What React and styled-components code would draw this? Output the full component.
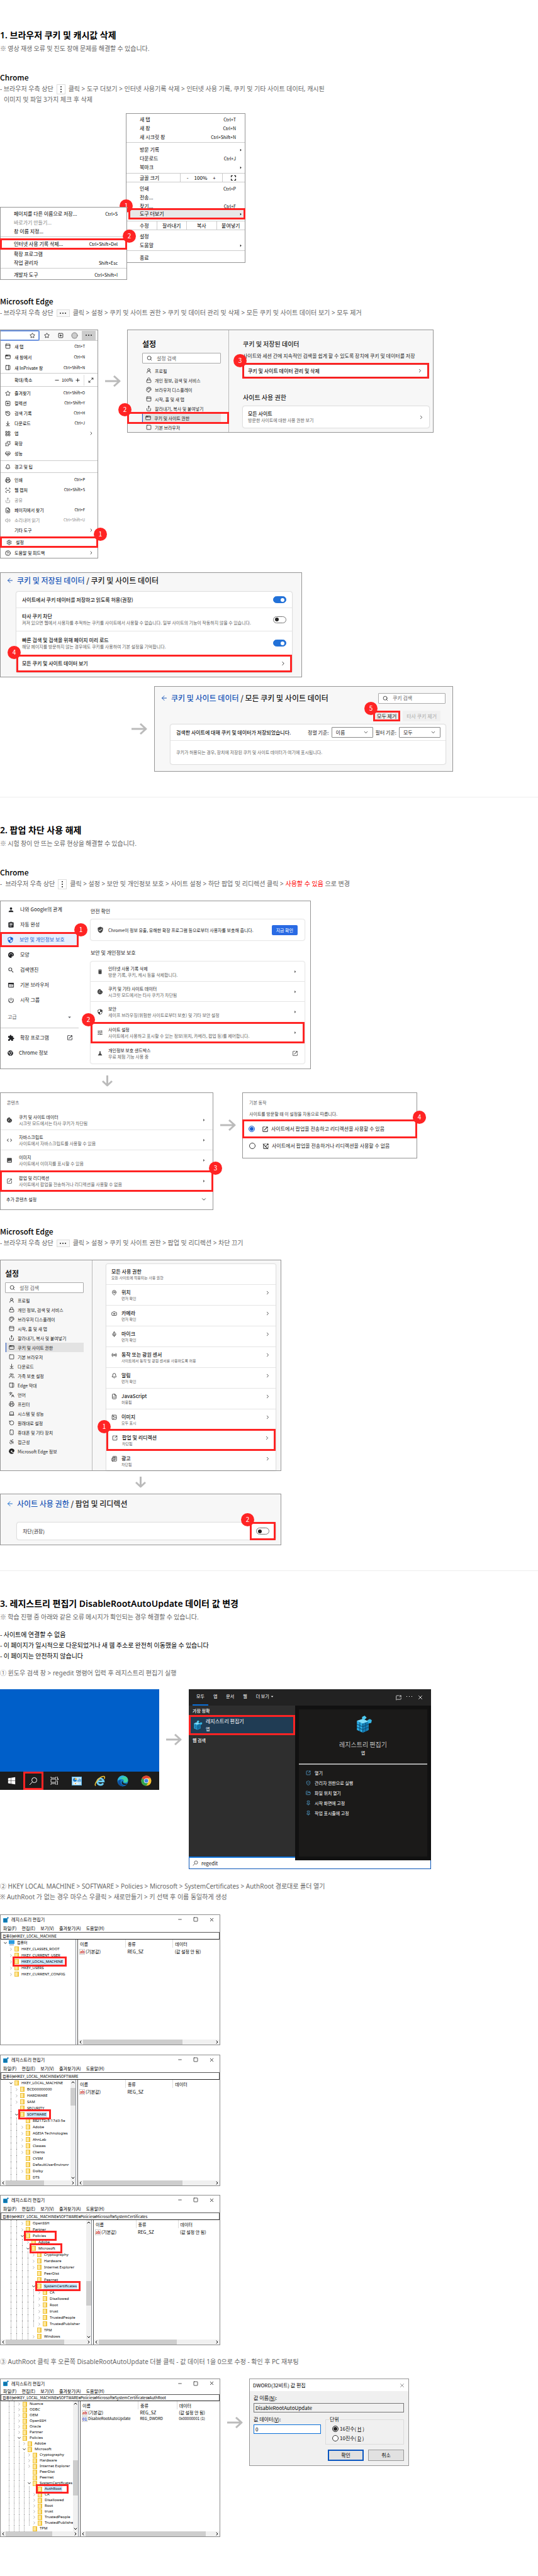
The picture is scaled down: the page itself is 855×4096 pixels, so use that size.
import { useState } from "react";
import styled, { createGlobalStyle, css } from "styled-components";
import {
  Accessibility, AppWindow, ArrowLeft, ArrowDownToLine, Bell, Camera, ChevronDown, ChevronLeft, ChevronRight,
  ChevronUp, CircleUserRound, FolderOpen, HeartPulse, History, Image, Languages, Laptop, LayoutGrid,
  Lock, MapPin, Maximize2, MessageSquareShare, Mic, Minus, PanelTop, Pin, Plus, Printer, Puzzle, Radio as RadioIcon,
  RotateCcw, ScanLine, Search, Settings, Share, ShieldCheck, Smartphone, SquareArrowOutUpRight, SquarePlus,
  Star, Square, UserRound, Users, Volume2, X, CircleHelp, FileSearch, Palette, PanelRight, FileCode, Newspaper,
} from "lucide-react";
import {
  MdArrowDropDown, MdArrowRight, MdAssignment, MdCode, MdCookie, MdDelete, MdExtension, MdFullscreen, MdImage,
  MdOpenInNew, MdOutlineOpenInNewOff, MdPalette, MdPerson, MdPowerSettingsNew, MdScience, MdSearch, MdSecurity,
  MdTune, MdVerifiedUser, MdWeb,
} from "react-icons/md";
import { FaChrome, FaEdge, FaWindows } from "react-icons/fa";

const RED = "#ff2424";
const TEXT_FONT = '"Noto Sans", "Noto Sans CJK KR", sans-serif';

const GlobalStyle = createGlobalStyle`
  * {
    box-sizing: border-box;
  }
  body {
    margin: 0;
    background: #fff;
    color: #222;
    font-family: "Noto Sans CJK KR", "Open Sans", sans-serif;
  }
  button, input, select {
    font: inherit;
    color: inherit;
    margin: 0;
    padding: 0;
    border: 0;
    background: none;
    text-align: left;
  }
  h2, h3, h4, p, ul, fieldset {
    margin: 0;
    padding: 0;
  }
  ul {
    list-style: none;
  }
  svg {
    display: block;
    flex: none;
  }
`;

/* ---------- page text ---------- */

const Page = styled.main`
  padding: 4px 0 20px;
`;

const Section = styled.section`
  padding: 42px 0 40px;

  & + & {
    border-top: 1px solid #eee;
  }
`;

const Title = styled.h2`
  font-family: ${TEXT_FONT};
  font-size: 14px;
  line-height: 20px;
  font-weight: 600;
  color: #000;
`;

const Note = styled.p`
  margin-top: 3px;
  font-size: 10px;
  line-height: 16px;
  color: #666;
`;

const Browser = styled.h3`
  margin-top: ${(p) => p.$top || 26}px;
  font-size: 12px;
  line-height: 16px;
  font-weight: 500;
  color: #000;
`;

const Step = styled.p`
  display: flex;
  align-items: center;
  margin-top: ${(p) => p.$top || 0}px;
  font-family: ${TEXT_FONT};
  font-size: 10px;
  line-height: 17px;
  color: #666;
  white-space: pre;
`;

const StepNext = styled(Step)`
  padding-left: 6px;
`;

const Bullets = styled.ul`
  margin-top: 11px;
  font-size: 10px;
  line-height: 17px;
  color: #000;
`;

const Warn = styled.span`
  color: #f00;
`;

const Key = styled.span`
  display: inline-flex;
  align-items: center;
  justify-content: center;
  width: ${(p) => (p.$wide ? 21 : 14)}px;
  height: ${(p) => (p.$wide ? 12 : 16)}px;
  margin: 0 5px;
  border: 1px solid #ddd;
  background: ${(p) => (p.$wide ? "#f7f7f7" : "#fff")};
  color: #222;
`;

/* ---------- figures ---------- */

const Figures = styled.div`
  display: grid;
  grid-template-columns: ${(p) => p.$cols.map((c) => `minmax(0, ${c}fr)`).join(" ")};
  align-items: ${(p) => p.$align || "start"};
  margin-top: ${(p) => p.$top || 18}px;
`;

const Panel = styled.div`
  position: relative;
  border: 1px solid #959595;
  background: ${(p) => (p.$gray ? "#f7f7f7" : "#fff")};
  color: #1b1b1b;
  font-size: 8px;
  line-height: 10px;
`;

const ArrowCell = styled.div`
  display: flex;
  justify-content: ${(p) => p.$justify || "center"};
  padding: ${(p) => p.$pad || "0"};
`;

const Mark = styled.div`
  position: relative;
  z-index: 1;
  border: 3px solid ${RED};
  margin: ${(p) => p.$margin || "0"};
`;

const Badge = styled.span`
  position: absolute;
  z-index: 2;
  top: -17px;
  ${(p) => (p.$right ? "right" : "left")}: -17px;
  width: 21px;
  height: 21px;
  border-radius: 50%;
  background: ${RED};
  color: #fff;
  font-size: 10px;
  line-height: 20px;
  font-weight: 400;
  text-align: center;
`;

function FlowRight() {
  return (
    <svg width="25" height="18" viewBox="0 0 25 18" fill="none" stroke="#bbb" strokeWidth="3">
      <path d="M0 9h23M14 1l9 8-9 8" strokeLinejoin="round" />
    </svg>
  );
}

function FlowDown() {
  return (
    <svg width="17" height="18" viewBox="0 0 17 18" fill="none" stroke="#bbb" strokeWidth="3">
      <path d="M8.500 0v16M1 9l7.500 7L16 9" strokeLinejoin="round" />
    </svg>
  );
}

function Dots({ vertical }) {
  const at = [2, 6, 10];
  return (
    <svg width="12" height="12" viewBox="0 0 12 12" fill="#222">
      {at.map((n) => (
        <circle key={n} cx={vertical ? 6 : n} cy={vertical ? n : 6} r="1" />
      ))}
    </svg>
  );
}

/* ---------- menus ---------- */

const Menu = styled(Panel)`
  padding: ${(p) => p.$pad};
  margin: ${(p) => p.$margin || "0"};
  z-index: ${(p) => p.$z || 0};
  color: #000;
`;

const MenuItem = styled.button`
  display: flex;
  align-items: center;
  width: 100%;
  height: ${(p) => p.$h || 14}px;
  padding: ${(p) => p.$pad || "0 14px 0 21px"};
  background: ${(p) => (p.$on ? "#e8e8e8" : "none")};
  color: ${(p) => (p.$dim ? "#888" : "inherit")};
  white-space: nowrap;

  span {
    flex: 1;
  }

  kbd {
    font: inherit;
    font-size: 7px;
  }
`;

const Rule = styled.hr`
  margin: ${(p) => p.$m || "1px 0 4px"};
  border: 0;
  border-top: 1px solid #ccc;
`;

const Cells = styled.div`
  display: grid;
  grid-template-columns: ${(p) => p.$cols.map((c) => `${c}fr`).join(" ")};
  height: 15px;
  margin: ${(p) => p.$m};
  border: solid #ccc;
  border-width: 1px 0;

  > * {
    display: flex;
    align-items: center;
    justify-content: center;
  }

  > * + * {
    border-left: 1px solid #ccc;
  }

  > :first-child {
    justify-content: flex-start;
    padding-left: 21px;
  }
`;

const Zoom = styled.div`
  gap: 9px;
`;

function ChromeItem({ label, keys, more, ...rest }) {
  return (
    <MenuItem {...rest}>
      <span>{label}</span>
      {keys && <kbd>{keys}</kbd>}
      {more && <MdArrowRight size={9} style={{ marginRight: more }} />}
    </MenuItem>
  );
}

function ChromeMenus() {
  return (
    <Figures $cols={[202, 188, 465]} $top={13} $align="end">
      <Menu $pad="3px 0 0" $z={1}>
        <ChromeItem label="페이지를 다른 이름으로 저장..." keys="Ctrl+S" />
        <ChromeItem label="바로가기 만들기..." $dim />
        <ChromeItem label="창 이름 지정..." />
        <Rule $m="1px 0 2px" />
        <Mark $margin="0 -1px">
          <ChromeItem label="인터넷 사용 기록 삭제..." keys="Ctrl+Shift+Del" $h={12} $pad="0 12px 0 19px" />
          <Badge $right>2</Badge>
        </Mark>
        <ChromeItem label="확장 프로그램" />
        <ChromeItem label="작업 관리자" keys="Shift+Esc" />
        <Rule $m="1px 0 3px" />
        <ChromeItem label="개발자 도구" keys="Ctrl+Shift+I" />
      </Menu>
      <Menu $pad="2px 0 0" $margin="0 0 27px -2px">
        <ChromeItem label="새 탭" keys="Ctrl+T" />
        <ChromeItem label="새 창" keys="Ctrl+N" />
        <ChromeItem label="새 시크릿 창" keys="Ctrl+Shift+N" />
        <Rule />
        <ChromeItem label="방문 기록" more={-12} />
        <ChromeItem label="다운로드" keys="Ctrl+J" />
        <ChromeItem label="북마크" more={-12} />
        <Cells $cols={[84, 66, 36]} $m="2px 0 3px">
          <div>글꼴 크기</div>
          <Zoom>
            <button aria-label="축소">-</button>
            <span>100%</span>
            <button aria-label="확대">+</button>
          </Zoom>
          <button aria-label="전체 화면">
            <MdFullscreen size={14} />
          </button>
        </Cells>
        <ChromeItem label="인쇄" keys="Ctrl+P" />
        <ChromeItem label="전송..." />
        <ChromeItem label="찾기..." keys="Ctrl+F" />
        <Mark $margin="-4px -1px 0 3px">
          <ChromeItem label="도구 더보기" more={-8} $on $h={12} $pad="0 8px 0 15px" />
          <Badge>1</Badge>
        </Mark>
        <Cells $cols={[47, 47, 47, 45]} $m="2px 0 3px">
          <div>수정</div>
          <button>잘라내기</button>
          <button>복사</button>
          <button>붙여넣기</button>
        </Cells>
        <ChromeItem label="설정" />
        <ChromeItem label="도움말" more={-12} />
        <Rule $m="1px 0 4px" />
        <ChromeItem label="종료" />
      </Menu>
    </Figures>
  );
}

const Toolbar = styled.div`
  display: flex;
  align-items: center;
  height: 17px;
  background: #f7f7f7;
  border-bottom: 1px solid #ccc;

  > * {
    flex: 23;
    display: flex;
    justify-content: center;
  }

  > :first-child {
    flex: 57;
    height: 17px;
    align-items: center;
    justify-content: flex-end;
    padding-right: 5px;
    border: 2px solid #6c93e0;
    border-left: 0;
    border-radius: 0 3px 3px 0;
    background: #fff;
  }

  > :last-child {
    height: 15px;
    align-items: center;
    margin-right: 3px;
    background: #ccc;
  }
`;

const EdgeRow = styled(MenuItem)`
  height: ${(p) => p.$h || 16}px;
  padding: 0 20px 0 7px;
  gap: 6px;
  font-size: 7px;

  kbd {
    font-size: 6px;
  }

  > svg:last-child {
    margin-right: -14px;
  }
`;

const Blank = styled.i`
  width: 9px;
`;

const ZoomRow = styled.div`
  display: flex;
  align-items: center;
  height: 20px;
  padding-left: 22px;
  font-size: 7px;

  > span {
    flex: 1;
  }

  > b {
    width: 24px;
    font-weight: 400;
    text-align: center;
  }

  > button:last-child {
    margin-left: 5px;
    padding: 4px 6px;
    border-left: 1px solid #ddd;
  }
`;

const EDGE_TOP = [
  [PanelTop, "새 탭", "Ctrl+T"],
  [AppWindow, "새 창에서", "Ctrl+N"],
  [PanelRight, "새 InPrivate 창", "Ctrl+Shift+N"],
];

const EDGE_MIDDLE = [
  [Star, "즐겨찾기", "Ctrl+Shift+O"],
  [SquarePlus, "컬렉션", "Ctrl+Shift+Y"],
  [History, "검색 기록", "Ctrl+H"],
  [ArrowDownToLine, "다운로드", "Ctrl+J"],
  [LayoutGrid, "앱", null, true],
  [Puzzle, "확장"],
  [HeartPulse, "성능"],
];

const EDGE_TOOLS = [
  [Printer, "인쇄", "Ctrl+P"],
  [ScanLine, "웹 캡처", "Ctrl+Shift+S"],
  [Share, "공유", null, false, true],
  [FileSearch, "페이지에서 찾기", "Ctrl+F"],
  [Volume2, "소리내어 읽기", "Ctrl+Shift+U", false, true],
  [null, "기타 도구", null, true],
];

function EdgeItem({ item: [Icon, label, keys, more, dim], h }) {
  return (
    <EdgeRow $dim={dim} $h={h}>
      {Icon ? <Icon size={9} /> : <Blank />}
      <span>{label}</span>
      {keys && <kbd>{keys}</kbd>}
      {more && <ChevronRight size={8} />}
    </EdgeRow>
  );
}

function EdgeMenu() {
  return (
    <Menu $pad="0">
      <Toolbar>
        <div><Star size={9} /></div>
        <button aria-label="즐겨찾기"><Star size={9} /></button>
        <button aria-label="컬렉션"><SquarePlus size={9} /></button>
        <button aria-label="프로필"><CircleUserRound size={11} fill="#ccc" stroke="#777" /></button>
        <button aria-label="설정 및 기타"><Dots /></button>
      </Toolbar>
      {EDGE_TOP.map((item) => <EdgeItem key={item[1]} item={item} h={17} />)}
      <Rule $m="0" />
      <ZoomRow>
        <span>확대/축소</span>
        <button aria-label="축소"><Minus size={9} /></button>
        <b>100%</b>
        <button aria-label="확대"><Plus size={9} /></button>
        <button aria-label="전체 화면"><Maximize2 size={9} /></button>
      </ZoomRow>
      <Rule $m="0 0 2px" />
      {EDGE_MIDDLE.map((item) => <EdgeItem key={item[1]} item={item} />)}
      <Rule $m="3px 0 0" />
      <EdgeItem item={[Bell, "경고 및 팁"]} h={18} />
      <Rule $m="0 0 3px" />
      {EDGE_TOOLS.map((item) => <EdgeItem key={item[1]} item={item} />)}
      <Mark $margin="2px -1px 0">
        <EdgeItem item={[Settings, "설정"]} h={12} />
        <Badge $right>1</Badge>
      </Mark>
      <EdgeItem item={[CircleHelp, "도움말 및 피드백", null, true]} />
    </Menu>
  );
}

/* ---------- edge settings ---------- */

const Split = styled.div`
  display: grid;
  grid-template-columns: ${(p) => p.$cols.map((c) => `minmax(0, ${c}fr)`).join(" ")};
  height: 100%;
`;

const Side = styled.nav`
  padding: ${(p) => p.$pad};
  border-right: 1px solid #bbb;

  h4 {
    font-size: 12px;
    line-height: 14px;
    font-weight: 700;
  }
`;

const SearchBox = styled.label`
  display: flex;
  align-items: center;
  gap: ${(p) => p.$gap || 7}px;
  height: 17px;
  padding: 0 6px;
  border: 1px solid #aaa;
  border-radius: 1px;
  background: #fff;

  input {
    width: 100%;
    min-width: 0;
    outline: 0;
  }

  input::placeholder {
    color: #666;
    opacity: 1;
  }
`;

const SideList = styled.div`
  margin-top: 4px;
  font-size: 7px;
`;

const SideLink = styled.a`
  display: flex;
  align-items: center;
  gap: 5px;
  height: ${(p) => p.$h || 15}px;
  margin: ${(p) => p.$margin || "0"};
  padding-left: 6px;
  color: inherit;
  text-decoration: none;
  white-space: nowrap;
  ${(p) =>
    p.$on &&
    css`
      background: #e3e3e3;
      box-shadow: inset 1px 0 0 #e3e3e3, inset 2px 0 0 #2456c7;
    `}
`;

const Main = styled.div`
  padding: 15px 6px 6px 22px;

  h4 {
    font-size: 10px;
    line-height: 14px;
    font-weight: 500;
  }

  h4 + p {
    margin-top: 7px;
    white-space: nowrap;
  }
`;

const Card = styled.div`
  margin: ${(p) => p.$margin || "0"};
  border-radius: 3px;
  background: #fff;
  box-shadow: 0 0 2px rgba(0, 0, 0, 0.35);
`;

const CardRow = styled.div`
  display: flex;
  align-items: center;
  width: 100%;
  height: ${(p) => p.$h}px;
  padding: ${(p) => p.$pad || "0 9px"};
  gap: ${(p) => p.$gap || 0}px;
  border-bottom: ${(p) => (p.$line ? "1px solid #e5e5e5" : "0")};
  white-space: nowrap;
`;

const Copy = styled.span`
  flex: 1;
  min-width: 0;
  font-weight: ${(p) => (p.$bold ? 500 : 400)};

  small {
    display: block;
    margin-top: ${(p) => p.$gap || 0}px;
    font-size: ${(p) => p.$small || 7}px;
    font-weight: 400;
    color: #666;
  }
`;

const Toggle = styled.input.attrs({ type: "checkbox", role: "switch" })`
  appearance: none;
  display: flex;
  align-items: center;
  width: 21px;
  height: 11px;
  padding: 0 2px;
  border: 1px solid #777;
  border-radius: 6px;
  background: #fff;

  &::after {
    content: "";
    width: 6px;
    height: 6px;
    border-radius: 50%;
    background: #222;
  }

  &:checked {
    justify-content: flex-end;
    border-color: #2271d8;
    background: #2271d8;
  }

  &:checked::after {
    background: #fff;
  }
`;

const Crumb = styled.h4`
  display: flex;
  align-items: center;
  height: ${(p) => p.$h}px;
  padding-left: 9px;
  gap: 5px;
  font-size: 12px;
  font-weight: 500;
  white-space: pre;

  a {
    color: #1a56b8;
    text-decoration: none;
  }
`;

const SIDE_ITEMS = [
  [UserRound, "프로필"],
  [Lock, "개인 정보, 검색 및 서비스"],
  [Palette, "브라우저 디스플레이"],
  [PanelTop, "시작, 홈 및 새 탭"],
  [Share, "잘라내기, 복사 및 붙여넣기"],
  [AppWindow, "쿠키 및 사이트 권한"],
  [Square, "기본 브라우저"],
  [ArrowDownToLine, "다운로드"],
  [Users, "가족 보호 설정"],
  [PanelRight, "Edge 막대"],
  [Languages, "언어"],
  [Printer, "프린터"],
  [Laptop, "시스템 및 성능"],
  [RotateCcw, "원래대로 설정"],
  [Smartphone, "휴대폰 및 기타 장치"],
  [Accessibility, "접근성"],
  [FaEdge, "Microsoft Edge 정보"],
];

function SettingsSide({ pad, count, marked }) {
  return (
    <Side $pad={pad}>
      <h4>설정</h4>
      <SearchBox style={{ marginTop: 7 }}>
        <Search size={9} />
        <input placeholder="설정 검색" aria-label="설정 검색" />
      </SearchBox>
      <SideList>
        {SIDE_ITEMS.slice(0, count).map(([Icon, label], i) => {
          const on = i === 5;
          if (on && marked) {
            return (
              <Mark key={label} $margin="-2px -13px -2px -24px">
                <SideLink href="#site" $on $h={13} $margin="0 10px 0 20px">
                  <Icon size={9} />
                  {label}
                </SideLink>
                <Badge>2</Badge>
              </Mark>
            );
          }
          return (
            <SideLink key={label} href="#side" $on={on}>
              <Icon size={9} />
              {label}
            </SideLink>
          );
        })}
      </SideList>
    </Side>
  );
}

function CookieSettings() {
  return (
    <Panel $gray>
      <Split $cols={[161, 324]}>
        <SettingsSide pad="15px 12px 0 23px" count={7} marked />
        <Main>
          <h4>쿠키 및 저장된 데이터</h4>
          <p>사이트와 세션 간에 지속적인 검색을 쉽게 할 수 있도록 장치에 쿠키 및 데이터를 저장</p>
          <Mark $margin="6px 0 23px -1px">
            <Card>
              <CardRow as="button" $h={19} $pad="0 7px 0 6px">
                <Copy $bold>쿠키 및 사이트 데이터 관리 및 삭제</Copy>
                <ChevronRight size={9} />
              </CardRow>
            </Card>
            <Badge>3</Badge>
          </Mark>
          <h4>사이트 사용 권한</h4>
          <Card $margin="7px 0 0">
            <CardRow as="button" $h={34} $pad="0 8px">
              <Copy $bold>
                모든 사이트
                <small>방문한 사이트에 대한 사용 권한 보기</small>
              </Copy>
              <ChevronRight size={9} />
            </CardRow>
          </Card>
        </Main>
      </Split>
    </Panel>
  );
}

function CookieData() {
  const [on, setOn] = useState({ save: true, third: false, preload: true });
  const flip = (key) => () => setOn({ ...on, [key]: !on[key] });

  return (
    <Panel $gray>
      <Crumb $h={24}>
        <ArrowLeft size={12} color="#1a56b8" />
        <span><a href="#cookies">쿠키 및 저장된 데이터</a> / 쿠키 및 사이트 데이터</span>
      </Crumb>
      <Card $margin="6px 15px 7px 25px">
        <CardRow as="label" $h={26} $line>
          <Copy $bold>사이트에서 쿠키 데이터를 저장하고 읽도록 허용(권장)</Copy>
          <Toggle checked={on.save} onChange={flip("save")} />
        </CardRow>
        <CardRow as="label" $h={37} $line>
          <Copy $bold>
            타사 쿠키 차단
            <small>켜져 있으면 웹에서 사용자를 추적하는 쿠키를 사이트에서 사용할 수 없습니다. 일부 사이트의 기능이 작동하지 않을 수 있습니다.</small>
          </Copy>
          <Toggle checked={on.third} onChange={flip("third")} />
        </CardRow>
        <CardRow as="label" $h={37}>
          <Copy $bold>
            빠른 검색 및 검색을 위해 페이지 미리 로드
            <small>해당 페이지를 방문하지 않는 경우에도 쿠키를 사용하여 기본 설정을 기억합니다.</small>
          </Copy>
          <Toggle checked={on.preload} onChange={flip("preload")} />
        </CardRow>
        <Mark>
          <CardRow as="button" $h={22} $pad="0 6px">
            <Copy $bold>모든 쿠키 및 사이트 데이터 보기</Copy>
            <ChevronRight size={10} />
          </CardRow>
          <Badge>4</Badge>
        </Mark>
      </Card>
    </Panel>
  );
}

const HeadBar = styled.div`
  display: flex;
  justify-content: space-between;
  align-items: center;
  padding-right: 11px;

  label {
    width: 107px;
  }
`;

const Actions = styled.div`
  display: flex;
  justify-content: flex-end;
  gap: 4px;
  height: 17px;
  margin: 2px 19px 5px 0;
`;

const ActionButton = styled.button`
  display: block;
  height: 11px;
  padding: 0 3px;
  background: #ebebeb;
  white-space: nowrap;

  &:disabled {
    height: 17px;
    padding: 0 6px;
    background: #f0f0f0;
    color: #aaa;
  }
`;

const Pick = styled.label`
  display: flex;
  align-items: center;
  gap: 4px;
  margin-left: 4px;
`;

const PickBox = styled.span`
  position: relative;

  select {
    appearance: none;
    display: block;
    width: 66px;
    height: 17px;
    padding-left: 6px;
    border: 1px solid #888;
    border-radius: 1px;
    background: #fff;
  }

  svg {
    position: absolute;
    top: 4px;
    right: 7px;
    pointer-events: none;
  }
`;

const Muted = styled.p`
  padding: 0 9px;
  font-size: 7px;
  line-height: 37px;
  color: #666;
`;

function AllCookies() {
  return (
    <Panel $gray>
      <HeadBar>
        <Crumb $h={36}>
          <ArrowLeft size={12} color="#1a56b8" />
          <span><a href="#data">쿠키 및 사이트 데이터</a> / 모든 쿠키 및 사이트 데이터</span>
        </Crumb>
        <SearchBox>
          <Search size={9} />
          <input placeholder="쿠키 검색" aria-label="쿠키 검색" />
        </SearchBox>
      </HeadBar>
      <Actions>
        <Mark>
          <ActionButton>모두 제거</ActionButton>
          <Badge>5</Badge>
        </Mark>
        <ActionButton disabled>타사 쿠키 제거</ActionButton>
      </Actions>
      <Card $margin="0 11px 11px 25px">
        <CardRow $h={26} $line $pad="0 8px 0 9px">
          <Copy $bold>검색한 사이트에 대해 쿠키 및 데이터가 저장되었습니다.</Copy>
          <Pick>
            정렬 기준:
            <PickBox>
              <select defaultValue="이름"><option>이름</option></select>
              <ChevronDown size={9} />
            </PickBox>
          </Pick>
          <Pick>
            필터 기준:
            <PickBox>
              <select defaultValue="모두"><option>모두</option></select>
              <ChevronDown size={9} />
            </PickBox>
          </Pick>
        </CardRow>
        <Muted>쿠키가 허용되는 경우, 장치에 저장된 쿠키 및 사이트 데이터가 여기에 표시됩니다.</Muted>
      </Card>
    </Panel>
  );
}

/* ---------- chrome settings ---------- */

const ChromeSide = styled.nav`
  padding: 1px 0 13px;
`;

const ChromeLink = styled.a`
  display: flex;
  align-items: center;
  gap: 9px;
  height: ${(p) => p.$h || 24}px;
  margin-top: ${(p) => p.$top || 0}px;
  padding: 0 9px 0 ${(p) => (p.$on ? 8 : 11)}px;
  background: ${(p) => (p.$on ? "#e8f0fe" : "none")};
  color: ${(p) => (p.$on ? "#1a5fd0" : p.$dim ? "#5f6368" : "#202124")};
  text-decoration: none;

  span {
    flex: 1;
  }
`;

const ChromeMain = styled.div`
  padding: 11px 9px 8px 19px;

  h4 {
    font-size: 8px;
    line-height: 10px;
    font-weight: 400;
  }
`;

const BlueButton = styled.button`
  height: 16px;
  padding: 0 7px;
  border-radius: 2px;
  background: #2a6be4;
  color: #fff;
`;

const ChromeRow = styled(CardRow)`
  font-size: 7px;
  color: #202124;
`;

function SettingRow({ icon: Icon, title, text, end, ...rest }) {
  const End = end || MdArrowRight;
  return (
    <ChromeRow as="button" {...rest}>
      <Icon size={10} color="#444" />
      <Copy>
        {title}
        <small>{text}</small>
      </Copy>
      <End size={10} color="#444" />
    </ChromeRow>
  );
}

function ChromeSettings() {
  return (
    <Panel>
      <Split $cols={[124, 368]}>
        <ChromeSide>
          <ChromeLink href="#me"><MdPerson size={11} /><span>나와 Google의 관계</span></ChromeLink>
          <ChromeLink href="#auto"><MdAssignment size={11} /><span>자동 완성</span></ChromeLink>
          <Mark $margin="0 0 0 -1px">
            <ChromeLink href="#privacy" $on $h={18}><MdSecurity size={11} /><span>보안 및 개인정보 보호</span></ChromeLink>
            <Badge $right>1</Badge>
          </Mark>
          <ChromeLink href="#look"><MdPalette size={11} /><span>모양</span></ChromeLink>
          <ChromeLink href="#engine"><MdSearch size={11} /><span>검색엔진</span></ChromeLink>
          <ChromeLink href="#default"><MdWeb size={11} /><span>기본 브라우저</span></ChromeLink>
          <ChromeLink href="#start"><MdPowerSettingsNew size={11} /><span>시작 그룹</span></ChromeLink>
          <ChromeLink href="#more" $dim $top={3}><span>고급</span><MdArrowDropDown size={11} /></ChromeLink>
          <Rule $m="5px 0 3px" />
          <ChromeLink href="#ext"><MdExtension size={11} /><span>확장 프로그램</span><MdOpenInNew size={10} /></ChromeLink>
          <ChromeLink href="#about"><FaChrome size={9} /><span>Chrome 정보</span></ChromeLink>
        </ChromeSide>
        <ChromeMain>
          <h4>안전 확인</h4>
          <Card $margin="8px 0 15px">
            <ChromeRow $h={33} $pad="0 11px 0 10px" $gap={7}>
              <MdVerifiedUser size={11} color="#444" />
              <Copy>Chrome이 정보 유출, 유해한 확장 프로그램 등으로부터 사용자를 보호해 줍니다.</Copy>
              <BlueButton>지금 확인</BlueButton>
            </ChromeRow>
          </Card>
          <h4>보안 및 개인정보 보호</h4>
          <Card $margin="9px 0 0">
            <SettingRow $h={32} $pad="0 10px" $gap={8} $line icon={MdDelete} title="인터넷 사용 기록 삭제" text="방문 기록, 쿠키, 캐시 등을 삭제합니다." />
            <SettingRow $h={32} $pad="0 10px" $gap={8} $line icon={MdCookie} title="쿠키 및 기타 사이트 데이터" text="시크릿 모드에서는 타사 쿠키가 차단됨" />
            <SettingRow $h={32} $pad="0 10px" $gap={8} icon={MdSecurity} title="보안" text="세이프 브라우징(위험한 사이트로부터 보호) 및 기타 보안 설정" />
            <Mark>
              <SettingRow $h={28} $pad="0 7px" $gap={8} icon={MdTune} title="사이트 설정" text="사이트에서 사용하고 표시할 수 있는 정보(위치, 카메라, 팝업 등)를 제어합니다." />
              <Badge>2</Badge>
            </Mark>
            <SettingRow $h={32} $pad="0 10px" $gap={8} icon={MdScience} title="개인정보 보호 샌드박스" text="무료 체험 기능 사용 중" end={MdOpenInNew} />
          </Card>
        </ChromeMain>
      </Split>
    </Panel>
  );
}

const PlainHead = styled.h4`
  padding: 10px 10px 7px;
  font-size: 7px;
  line-height: 10px;
  font-weight: 400;
  color: #5f6368;
`;

function ContentSettings() {
  return (
    <Panel>
      <PlainHead>콘텐츠</PlainHead>
      <SettingRow $h={32} $pad="0 9px" $gap={10} $line icon={MdCookie} title="쿠키 및 사이트 데이터" text="시크릿 모드에서는 타사 쿠키가 차단됨" />
      <SettingRow $h={32} $pad="0 9px" $gap={10} $line icon={MdCode} title="자바스크립트" text="사이트에서 자바스크립트를 사용할 수 있음" />
      <SettingRow $h={32} $pad="0 9px" $gap={10} icon={MdImage} title="이미지" text="사이트에서 이미지를 표시할 수 있음" />
      <Mark $margin="0 -1px">
        <SettingRow $h={28} $pad="0 7px" $gap={10} icon={MdOpenInNew} title="팝업 및 리디렉션" text="사이트에서 팝업을 전송하거나 리디렉션을 사용할 수 없음" />
        <Badge $right>3</Badge>
      </Mark>
      <ChromeRow as="button" $h={28} $pad="0 9px 5px">
        <Copy>추가 콘텐츠 설정</Copy>
        <ChevronDown size={10} />
      </ChromeRow>
    </Panel>
  );
}

const RadioRow = styled.label`
  display: flex;
  align-items: center;
  height: ${(p) => p.$h}px;
  padding-left: ${(p) => p.$left}px;
  white-space: nowrap;

  svg {
    margin: 0 4px 0 11px;
  }
`;

const Radio = styled.input.attrs({ type: "radio" })`
  appearance: none;
  flex: none;
  width: 10px;
  height: 10px;
  border: 1px solid #333;
  border-radius: 50%;
  background: #fff;

  &:checked {
    border-color: ${(p) => p.$color || "#1a5fd0"};
    background: ${(p) => p.$color || "#1a5fd0"};
    box-shadow: inset 0 0 0 1px #fff;
  }
`;

const RadioLead = styled.p`
  padding: 1px 10px 4px;
  font-size: 7px;
  color: #444;
`;

function DefaultAction() {
  return (
    <Panel>
      <PlainHead>기본 동작</PlainHead>
      <RadioLead>사이트를 방문할 때 이 설정을 자동으로 따릅니다.</RadioLead>
      <Mark $margin="0 -1px">
        <RadioRow $h={24} $left={7}>
          <Radio name="popup" defaultChecked />
          <MdOpenInNew size={11} />
          사이트에서 팝업을 전송하고 리디렉션을 사용할 수 있음
        </RadioRow>
        <Badge $right>4</Badge>
      </Mark>
      <RadioRow $h={31} $left={10} style={{ paddingBottom: 7 }}>
        <Radio name="popup" />
        <MdOutlineOpenInNewOff size={11} />
        사이트에서 팝업을 전송하거나 리디렉션을 사용할 수 없음
      </RadioRow>
    </Panel>
  );
}

/* ---------- edge permissions ---------- */

const PermCard = styled(Card)`
  align-self: start;
  margin: 6px 8px 0 22px;
  border-radius: 2px 2px 0 0;
`;

const PermRow = styled(CardRow)`
  align-items: flex-start;
  padding: ${(p) => (p.$in ? "6px 6px 0" : "7px 8px 0")};
  gap: 7px;

  > svg {
    margin-top: 1px;
  }
`;

const PERMS = [
  [MapPin, "위치", "먼저 확인"],
  [Camera, "카메라", "먼저 확인"],
  [Mic, "마이크", "먼저 확인"],
  [RadioIcon, "동작 또는 광원 센서", "사이트에서 동작 및 광원 센서를 사용하도록 허용"],
  [Bell, "알림", "먼저 확인"],
  [FileCode, "JavaScript", "허용됨"],
  [Image, "이미지", "모두 표시"],
  [SquareArrowOutUpRight, "팝업 및 리디렉션", "차단됨"],
  [Newspaper, "광고", "차단됨"],
];

function Permission({ item: [Icon, title, text], ...rest }) {
  return (
    <PermRow as="button" {...rest}>
      <Icon size={9} />
      <Copy $bold $small={6}>
        {title}
        <small>{text}</small>
      </Copy>
      <ChevronRight size={9} />
    </PermRow>
  );
}

function Permissions() {
  return (
    <Panel $gray>
      <Split $cols={[146, 299]}>
        <SettingsSide pad="14px 13px 21px 7px" />
        <PermCard>
          <PermRow $h={33} $line>
            <Copy $bold $small={6}>
              모든 사용 권한
              <small>모든 사이트에 적용되는 사용 권한</small>
            </Copy>
          </PermRow>
          {PERMS.map((item, i) =>
            i === 7 ? (
              <Mark key={item[1]} $margin="-2px 0 0">
                <Permission item={item} $h={29} $in />
                <Badge>1</Badge>
              </Mark>
            ) : (
              <Permission key={item[1]} item={item} $h={i === 8 ? 31 : 33} $line={i < 6} />
            )
          )}
        </PermCard>
      </Split>
    </Panel>
  );
}

const ToggleMark = styled(Mark)`
  display: flex;
  align-items: center;
  justify-content: center;
  width: 41px;
  height: 29px;
`;

function PopupSetting() {
  const [on, setOn] = useState(false);
  return (
    <Panel $gray>
      <Crumb $h={30}>
        <ArrowLeft size={12} color="#1a6fd0" />
        <span><a href="#perms">사이트 사용 권한</a> / 팝업 및 리디렉션</span>
      </Crumb>
      <Card $margin="15px 8px 8px 26px">
        <CardRow as="label" $h={27} $pad="0 0 0 9px">
          <Copy>차단(권장)</Copy>
          <ToggleMark>
            <Toggle checked={on} onChange={() => setOn(!on)} />
            <Badge>2</Badge>
          </ToggleMark>
        </CardRow>
      </Card>
    </Panel>
  );
}

/* ---------- windows desktop ---------- */

const Desktop = styled.div`
  background: #005fc9;
  padding-top: 131px;
`;

const Taskbar = styled.div`
  display: grid;
  grid-template-columns: 37fr 32fr 35fr 36fr 38fr 34fr 41fr;
  height: 29px;
  background: #1c1c1c;
  color: #fff;

  button {
    display: flex;
    align-items: center;
    justify-content: center;
  }

  button:nth-child(2) {
    border: 3px solid ${RED};
  }
`;

function ControlPanelIcon() {
  return (
    <svg width="16" height="16" viewBox="0 0 16 16">
      <rect x="0" y="1" width="16" height="14" fill="#5db7ee" />
      <rect x="1" y="2" width="14" height="12" fill="#bfe5fa" />
      <circle cx="5" cy="6" r="3" fill="#1d78c8" />
      <path d="M5 6V3a3 3 0 0 1 3 3z" fill="#f5b73b" />
      <path d="M10 9V6M12 9V4M14 9V5" stroke="#1d78c8" />
      <path d="M3 11h7M3 13h9" stroke="#fff" />
      <circle cx="6" cy="12" r="1" fill="#f5a623" />
    </svg>
  );
}

function ExplorerIcon() {
  return (
    <svg width="18" height="18" viewBox="0 0 18 18" fill="none">
      <path d="M14 12.500a5 5 0 1 1 .6-3H5" stroke="#6ccdf5" strokeWidth="3" />
      <path d="M2 16.500C-1 14 8 1 15 1.500c2 .4 1.500 2.500.5 4" stroke="#f7c52d" strokeWidth="1.500" />
    </svg>
  );
}

function EdgeIcon() {
  return (
    <svg width="18" height="18" viewBox="0 0 18 18">
      <circle cx="9" cy="9" r="8.500" fill="#1480d0" />
      <path d="M1 8C2 3 5 .5 9 .5c5 0 8.500 3 8.500 7 0 3-2.500 4-5 4-1.500 0-2.500-.6-2-1.500C11.500 8 10 6 7.500 6 4.500 6 2 6.500 1 8z" fill="#3fcf9f" />
      <path d="M1 8C2 3 5 .5 9 .5c2 0 3.500.5 5 1.500-4 0-7 1-8 4-2 0-4 .8-5 2z" fill="#2db6df" />
      <path d="M6.500 7.500C4 11 7 16.500 13 16 9 18.500 3 17 1.500 12 .5 9 3.500 6.500 6.500 7.500z" fill="#0c4f9e" />
      <path d="M9 8.500c-.8 3 2 5.500 7.500 4.500-1.500 2-3.500 2.500-5.500 2.300C7 14.500 6.500 10.500 9 8.500z" fill="#1b1b1b" />
    </svg>
  );
}

function ChromeIcon() {
  return (
    <svg width="17" height="17" viewBox="0 0 18 18">
      <circle cx="9" cy="9" r="8.500" fill="#fbc02d" />
      <path d="M9 9L1.600 4.700A8.500 8.500 0 0 1 16.400 4.800H9z" fill="#e14233" />
      <path d="M9 9l3.500 2L9 17.500A8.500 8.500 0 0 1 1.600 4.800z" fill="#2fa24f" />
      <circle cx="9" cy="9" r="4" fill="#fff" />
      <circle cx="9" cy="9" r="3.200" fill="#3f7fe8" />
    </svg>
  );
}

function TaskViewIcon() {
  return (
    <svg width="13" height="13" viewBox="0 0 13 13" fill="none" stroke="#ddd">
      <path d="M1 0v2h8V0M1 13v-2h8v2M1 4h8v5H1zM11.500 0v3M11.500 6v7" />
      <path d="M11 4h2" strokeWidth="2" />
    </svg>
  );
}

function LensIcon({ size = 14, color = "#fff" }) {
  return (
    <svg width={size} height={size} viewBox="0 0 14 14" fill="none" stroke={color}>
      <circle cx="8.500" cy="5.500" r="4" />
      <path d="M5.500 8.500L1 13" />
    </svg>
  );
}

/* stacked blue cubes of the registry editor */
function RegeditIcon({ size }) {
  return (
    <svg width={size} height={size} viewBox="0 0 28 28">
      <path d="M4 9l9-3 9 4v13l-9 4-9-4z" fill="#2aa9e0" />
      <path d="M4 9l9-3 9 4-9 3z" fill="#7fdcf8" />
      <path d="M13 13l9-3v13l-9 4z" fill="#1680b8" />
      <path d="M4 14l9 4 9-4M4 18.500l9 4 9-4M8.500 11v14M17.500 11.500V25M13 13v14" stroke="#0c4e78" fill="none" />
      <path d="M12 3l4-2 3 3-3 3-4-1z" fill="#4cc9f0" />
      <path d="M20 8l4-2 3 2-1 4-4 1z" fill="#35b5e5" />
    </svg>
  );
}

const StartMenu = styled.div`
  background: #222;
  color: #fff;
  font-size: 7px;
  line-height: 10px;
`;

const StartTabs = styled.div`
  display: flex;
  align-items: center;
  height: 26px;
  padding: 0 12px 0 6px;
  gap: 2px;

  button {
    display: flex;
    align-items: center;
    height: 26px;
    padding: 0 6px 2px;
    border-bottom: 2px solid transparent;
  }

  button:first-child {
    border-color: #0a6fd8;
  }

  i {
    flex: 1;
  }
`;

const StartBody = styled.div`
  display: grid;
  grid-template-columns: 169fr 216fr;
  min-height: 240px;
`;

const StartList = styled.div`
  background: #2e2e2e;

  h4 {
    padding: 3px 6px 2px;
    font-size: 7px;
    line-height: 10px;
    font-weight: 500;
  }
`;

const Hit = styled.button`
  display: flex;
  align-items: center;
  gap: 5px;
  width: 100%;
  height: 26px;
  padding-left: 3px;
  background: #203c54;

  span {
    line-height: 12px;
    font-size: 8px;
  }

  small {
    display: block;
    font-size: 7px;
  }
`;

const StartApp = styled.div`
  margin: 6px 6px 0;
  background: #1b1a19;
  box-shadow: 0 0 0 6px #111;
`;

const AppHead = styled.div`
  display: flex;
  flex-direction: column;
  align-items: center;
  height: 88px;
  padding-top: 9px;
  border-bottom: 2px solid #aaa;

  b {
    margin-top: 10px;
    font-size: 10px;
    line-height: 16px;
    font-weight: 300;
  }
`;

const AppAction = styled.button`
  display: flex;
  align-items: center;
  gap: 6px;
  height: 16px;
  padding-left: 11px;

  &:first-of-type {
    margin-top: 5px;
  }

  svg {
    color: #5bb5ef;
  }
`;

const StartSearch = styled.label`
  display: flex;
  align-items: center;
  gap: 5px;
  height: 20px;
  padding-left: 5px;
  border: 1px solid #0a56b8;
  border-top: 2px solid #0a6fd8;
  background: #fff;
  color: #111;
  font-size: 8px;

  input {
    flex: 1;
  }
`;

function WindowsSearch() {
  return (
    <StartMenu>
      <StartTabs>
        <button>모두</button>
        <button>앱</button>
        <button>문서</button>
        <button>웹</button>
        <button>더 보기 <MdArrowDropDown size={9} /></button>
        <i />
        <MessageSquareShare size={9} />
        <button aria-label="옵션"><svg width="9" height="9" viewBox="0 0 9 9" fill="#fff"><path d="M0 4h1v1H0zM4 4h1v1H4zM8 4h1v1H8z" /></svg></button>
        <X size={10} />
      </StartTabs>
      <StartBody>
        <StartList>
          <h4>가장 정확</h4>
          <Mark>
            <Hit>
              <RegeditIcon size={16} />
              <span>레지스트리 편집기<small>앱</small></span>
            </Hit>
          </Mark>
          <h4>웹 검색</h4>
        </StartList>
        <StartApp>
          <AppHead>
            <RegeditIcon size={29} />
            <b>레지스트리 편집기</b>
            앱
          </AppHead>
          <AppAction><SquareArrowOutUpRight size={8} />열기</AppAction>
          <AppAction><ShieldCheck size={8} />관리자 권한으로 실행</AppAction>
          <AppAction><FolderOpen size={8} />파일 위치 열기</AppAction>
          <AppAction><Pin size={8} />시작 화면에 고정</AppAction>
          <AppAction><Pin size={8} />작업 표시줄에 고정</AppAction>
        </StartApp>
      </StartBody>
      <StartSearch>
        <LensIcon size={9} color="#111" />
        <input defaultValue="regedit" aria-label="검색" />
      </StartSearch>
    </StartMenu>
  );
}

/* ---------- registry editor ---------- */

const Registry = styled(Panel)`
  display: flex;
  flex-direction: column;
  min-height: ${(p) => p.$min || 0}px;
  border-color: #8d8d8d;
  color: #000;
  font-size: 7px;
`;

const RegTitle = styled.div`
  display: flex;
  align-items: center;
  height: ${(p) => (p.$dense ? 13 : 14)}px;
  padding: 0 8px 0 4px;
  gap: 4px;

  span {
    flex: 1;
  }

  button + button {
    margin-left: 13px;
  }
`;

const RegMenu = styled.div`
  display: flex;
  align-items: center;
  gap: 8px;
  height: ${(p) => (p.$dense ? 11 : 13)}px;
  padding-left: 4px;
`;

const RegPath = styled.input`
  display: block;
  width: 100%;
  height: ${(p) => (p.$dense ? 11 : 12)}px;
  padding-left: 2px;
  border: 1px solid #555;
  border-bottom-color: #222;
  font-size: 6px;
`;

const RegBody = styled.div`
  display: grid;
  flex: 1;
  grid-template-columns: ${(p) => p.$left}fr ${(p) => 348 - p.$left}fr;
`;

const Pane = styled.div`
  display: flex;
  flex-direction: column;
  min-width: 0;
  border-right: ${(p) => (p.$first ? "1px solid #8a8f98" : "0")};
`;

const ListPane = styled(Pane)`
  margin-left: 2px;
  border-left: 1px solid #555;
`;

const TreeWrap = styled.div`
  display: flex;
  flex: 1;
`;

const Tree = styled.ul`
  flex: 1;
  min-width: 0;
  padding-left: ${(p) => (p.$dense ? 1 : 3)}px;
  font-family: ${TEXT_FONT};
  font-size: 6px;
`;

const Node = styled.li`
  display: flex;
  align-items: center;
  height: ${(p) => (p.$dense ? 9 : 10)}px;
  white-space: nowrap;
`;

const Guide = styled.i`
  flex: none;
  width: ${(p) => (p.$dense ? 8 : 9)}px;
  height: 100%;

  &::after {
    content: "";
    display: ${(p) => (p.$hide ? "none" : "block")};
    height: 100%;
    margin-left: 4px;
    border-left: 1px dotted #999;
  }
`;

const Fold = styled.button`
  display: flex;
  justify-content: center;
  flex: none;
  width: 9px;
  margin-right: 1px;
`;

const NodeLabel = styled.span`
  display: flex;
  align-items: center;
  gap: 3px;
  height: 100%;
  ${(p) =>
    p.$marked &&
    css`
      position: relative;
      z-index: 1;
      min-width: 46px;
      padding-right: 2px;
      background: #fff;
      outline: 3px solid ${RED};
    `}

  b {
    padding: 0 1px;
    font-weight: 400;
    line-height: 9px;
    background: ${(p) => (p.$on ? "#cce8ff" : "none")};
  }
`;

const Folder = styled.i`
  width: 7px;
  height: 8px;
  border: 1px solid #efc33c;
  border-right-width: 2px;
  background: #ffe79a;
`;

const Table = styled.table`
  width: 100%;
  table-layout: fixed;
  border-collapse: collapse;
  font-size: 7px;
  line-height: 10px;

  th,
  td {
    height: ${(p) => (p.$dense ? 10 : 12)}px;
    padding: 0 0 0 3px;
    font-weight: 400;
    text-align: left;
    white-space: nowrap;
  }

  th {
    height: 13px;
    border-right: 1px solid #ddd;
  }

  th:last-child {
    border: 0;
  }

  td:first-child {
    padding-left: 2px;
  }
`;

const DataRow = styled.tr`
  font-size: ${(p) => (p.$num ? 6 : 7)}px;
`;

const Value = styled.div`
  display: flex;
  align-items: center;
  gap: 1px;

  i {
    width: 9px;
    border: 1px solid #ccc;
    font-style: normal;
    font-weight: 700;
    font-size: 6px;
    line-height: 7px;
    text-align: center;
    color: ${(p) => (p.$num ? "#1d3fc4" : "#c8281e")};
  }
`;

const Scroll = styled.div`
  display: flex;
  flex: none;
  flex-direction: ${(p) => (p.$v ? "column" : "row")};
  align-items: center;
  ${(p) => (p.$v ? "width" : "height")}: 8px;
  background: #f0f0f0;
`;

const Thumb = styled.i`
  align-self: stretch;
  background: ${(p) => (p.$on ? "#cdcdcd" : "none")};
`;

/* parts: space before the thumb, the thumb, space after it */
function ScrollBar({ vertical, parts }) {
  const Back = vertical ? ChevronUp : ChevronLeft;
  const Next = vertical ? ChevronDown : ChevronRight;
  return (
    <Scroll $v={vertical}>
      <button aria-label="이전"><Back size={8} strokeWidth={3} /></button>
      {parts.map((n, i) => (
        <Thumb key={i} $on={i === 1} style={{ flexGrow: n }} />
      ))}
      <button aria-label="다음"><Next size={8} strokeWidth={3} /></button>
    </Scroll>
  );
}

function RegLogo() {
  return (
    <svg width="9" height="9" viewBox="0 0 9 9">
      <path d="M0 2h7v7H0z" fill="#1f9bd8" />
      <path d="M2.500 2v7M4.500 2v7M0 4.500h7M0 6.500h7" stroke="#0b4f7a" strokeWidth=".6" />
      <path d="M7.500 0L9 1.500 7.500 3 6 1.500z" fill="#1b79b5" />
    </svg>
  );
}

function MonitorIcon() {
  return (
    <svg width="9" height="8" viewBox="0 0 9 8">
      <path d="M0 0h9v6H0z" fill="#2c9be0" />
      <path d="M1 7.500h7" stroke="#789" />
    </svg>
  );
}

/* node: [level, name, state, flags] - state "+" closed, "-" open, "" leaf; flags "m" framed, "s" selected */
function TreeNode({ node: [level, name, state, flags = ""], dense }) {
  return (
    <Node $dense={dense}>
      {Array.from({ length: level }, (_, i) => (
        <Guide key={i} $dense={dense} $hide={i === 0} />
      ))}
      <Fold aria-label={name}>
        {state === "+" && <ChevronRight size={7} color="#777" />}
        {state === "-" && <ChevronDown size={7} strokeWidth={3} />}
      </Fold>
      <NodeLabel $marked={flags.includes("m")} $on={flags.includes("s")}>
        {level === 0 ? <MonitorIcon /> : <Folder />}
        <b>{name}</b>
      </NodeLabel>
    </Node>
  );
}

function RegistryEditor({ path, left, nodes, values, cols = [67, 67], dense, min, vbar, hbar, listBar }) {
  return (
    <Registry $min={min}>
      <RegTitle $dense={dense}>
        <RegLogo />
        <span>레지스트리 편집기</span>
        <button aria-label="최소화"><Minus size={8} /></button>
        <button aria-label="최대화"><Square size={8} /></button>
        <button aria-label="닫기"><X size={9} /></button>
      </RegTitle>
      <RegMenu $dense={dense}>
        {["파일(F)", "편집(E)", "보기(V)", "즐겨찾기(A)", "도움말(H)"].map((m) => (
          <button key={m}>{m}</button>
        ))}
      </RegMenu>
      <RegPath $dense={dense} defaultValue={path} aria-label="경로" />
      <RegBody $left={left}>
        <Pane $first>
          <TreeWrap>
            <Tree $dense={dense}>
              {nodes.map((node) => <TreeNode key={node[1] + node[0]} node={node} dense={dense} />)}
            </Tree>
            {vbar && <ScrollBar vertical parts={vbar} />}
          </TreeWrap>
          {hbar && <ScrollBar parts={hbar} />}
        </Pane>
        <ListPane>
          <TreeWrap>
            <div>
              <Table $dense={dense}>
                <colgroup>
                  <col style={{ width: cols[0] }} />
                  <col style={{ width: cols[1] }} />
                  <col style={{ width: 66 }} />
                </colgroup>
                <thead>
                  <tr><th>이름</th><th>종류</th><th>데이터</th></tr>
                </thead>
                <tbody>
                  {values.map(([name, type, data]) => {
                    const num = type === "REG_DWORD";
                    return (
                      <DataRow key={name} $num={num}>
                        <td>
                          <Value $num={num}>
                            <i>{num ? "01" : "ab"}</i>
                            {name}
                          </Value>
                        </td>
                        <td>{type}</td>
                        <td>{data}</td>
                      </DataRow>
                    );
                  })}
                </tbody>
              </Table>
            </div>
          </TreeWrap>
          <ScrollBar parts={listBar} />
        </ListPane>
      </RegBody>
    </Registry>
  );
}

const ROOT_NODES = [
  [0, "컴퓨터", "-"],
  [1, "HKEY_CLASSES_ROOT", "+"],
  [1, "HKEY_CURRENT_USER", "+"],
  [1, "HKEY_LOCAL_MACHINE", "+", "ms"],
  [1, "HKEY_USERS", "+"],
  [1, "HKEY_CURRENT_CONFIG", "+"],
];

const SOFTWARE_NODES = [
  [1, "HKEY_LOCAL_MACHINE", "-"],
  [2, "BCD00000000", "+"],
  [2, "HARDWARE", "+"],
  [2, "SAM", "+"],
  [2, "SECURITY", ""],
  [2, "SOFTWARE", "-", "ms"],
  [3, "882172c5-17d3-5e", ""],
  [3, "Adobe", "+"],
  [3, "AGEIA Technologies", "+"],
  [3, "AhnLab", "+"],
  [3, "Classes", "+"],
  [3, "Clients", "+"],
  [3, "CVSM", ""],
  [3, "DefaultUserEnvironr", ""],
  [3, "Dolby", "+"],
  [3, "DTS", ""],
];

const MICROSOFT_NODES = [
  [5, "Cryptography", "+"],
  [5, "Hardware", "+"],
  [5, "Internet Explorer", "+"],
  [5, "PeerDist", ""],
  [5, "Peernet", ""],
];

const CERT_NODES = [
  [6, "CA", "+"],
  [6, "Disallowed", "+"],
  [6, "Root", "+"],
  [6, "trust", "+"],
  [6, "TrustedPeople", "+"],
  [6, "TrustedPublisher", "+"],
  [5, "TPM", ""],
];

const POLICY_NODES = [
  [3, "OpenSSH", "+"],
  [3, "Partner", "+"],
  [3, "Policies", "-", "m"],
  [4, "Adobe", "+"],
  [4, "Microsoft", "-", "m"],
  ...MICROSOFT_NODES,
  [5, "SystemCertificates", "-", "ms"],
  ...CERT_NODES,
  [5, "Windows", "+"],
];

const AUTH_NODES = [
  [3, "Nuance", "+"],
  [3, "ODBC", "+"],
  [3, "OEM", "+"],
  [3, "OpenSSH", "+"],
  [3, "Oracle", "+"],
  [3, "Partner", "+"],
  [3, "Policies", "-"],
  [4, "Adobe", "+"],
  [4, "Microsoft", "-"],
  ...MICROSOFT_NODES,
  [5, "SystemCertificates", "-"],
  [6, "AuthRoot", "", "ms"],
  ...CERT_NODES,
];

/* ---------- dword dialog ---------- */

const Dialog = styled(Panel)`
  background: #f0f0f0;
  color: #000;
`;

const DialogTitle = styled.div`
  display: flex;
  align-items: center;
  justify-content: space-between;
  height: 19px;
  padding: 0 5px;
  background: #fff;
`;

const DialogBody = styled.div`
  display: grid;
  grid-template-columns: 107fr 125fr;
  column-gap: 7px;
  padding: 6px 7px 7px 6px;
`;

const Field = styled.label`
  display: block;
  grid-column: ${(p) => (p.$full ? "1 / -1" : "auto")};

  input {
    display: block;
    width: 100%;
    height: 15px;
    margin-top: 3px;
    padding-left: 2px;
    border: ${(p) => (p.$full ? "1px solid #777" : "1px solid #0a6fd8")};
    background: ${(p) => (p.$full ? "#f0f0f0" : "#fff")};
  }
`;

const Units = styled.fieldset`
  height: 45px;
  padding: 2px 0 0 10px;
  border: 1px solid #dcdcdc;

  legend {
    margin-left: -5px;
    padding: 0 1px;
  }

  label {
    display: flex;
    align-items: center;
    gap: 2px;
    height: 15px;
  }
`;

const DialogButtons = styled.div`
  grid-column: 1 / -1;
  display: flex;
  justify-content: flex-end;
  gap: 7px;
  margin-top: 8px;

  button {
    width: 57px;
    height: 18px;
    border: 1px solid #999;
    background: #e1e1e1;
    text-align: center;
  }

  button:first-child {
    border: 2px solid #0a56c0;
  }
`;

function DwordDialog() {
  return (
    <Dialog>
      <DialogTitle>
        DWORD(32비트) 값 편집
        <button aria-label="닫기"><X size={10} strokeWidth={1} /></button>
      </DialogTitle>
      <DialogBody>
        <Field $full>
          값 이름(<u>N</u>):
          <input defaultValue="DisableRootAutoUpdate" readOnly />
        </Field>
        <Field style={{ marginTop: 6 }}>
          값 데이터(<u>V</u>):
          <input defaultValue="0" />
        </Field>
        <Units style={{ marginTop: 6 }}>
          <legend>단위</legend>
          <label><Radio name="base" $color="#222" defaultChecked />16진수(<u>H</u>)</label>
          <label><Radio name="base" />10진수(<u>D</u>)</label>
        </Units>
        <DialogButtons>
          <button>확인</button>
          <button>취소</button>
        </DialogButtons>
      </DialogBody>
    </Dialog>
  );
}

/* ---------- page ---------- */

const App = () => {
  const unset = ["(기본값)", "REG_SZ", "(값 설정 안 됨)"];

  return (
    <Page>
      <GlobalStyle />
      <Section>
        <Title>1. 브라우저 쿠키 및 캐시값 삭제</Title>
        <Note>※ 영상 재생 오류 및 진도 장애 문제를 해결할 수 있습니다.</Note>
        <Browser $top={30}>Chrome</Browser>
        <Step $top={2}>
          - 브라우저 우측 상단<Key><Dots vertical /></Key>클릭 &gt; 도구 더보기 &gt; 인터넷 사용기록 삭제 &gt; 인터넷 사용 기록, 쿠키 및 기타 사이트 데이터, 캐시된
        </Step>
        <StepNext>이미지 및 파일 3가지 체크 후 삭제</StepNext>
        <ChromeMenus />

        <Browser>Microsoft Edge</Browser>
        <Step $top={2}>
          - 브라우저 우측 상단<Key $wide><Dots /></Key>클릭 &gt; 설정 &gt; 쿠키 및 사이트 권한 &gt; 쿠키 및 데이터 관리 및 삭제 &gt; 모든 쿠키 및 사이트 데이터 보기 &gt; 모두 제거
        </Step>
        <Figures $cols={[156, 46, 487, 166]}>
          <EdgeMenu />
          <ArrowCell $pad="73px 0 0"><FlowRight /></ArrowCell>
          <CookieSettings />
        </Figures>
        <Figures $cols={[480, 375]} $top={22}>
          <CookieData />
        </Figures>
        <Figures $cols={[245, 475, 135]} $top={14} $align="center">
          <ArrowCell $justify="flex-end" $pad="0 11px 0 0"><FlowRight /></ArrowCell>
          <AllCookies />
        </Figures>
      </Section>

      <Section>
        <Title>2. 팝업 차단 사용 해제</Title>
        <Note>※ 시험 창이 안 뜨는 오류 현상을 해결할 수 있습니다.</Note>
        <Browser $top={30}>Chrome</Browser>
        <Step $top={2}>
          -  브라우저 우측 상단<Key><Dots vertical /></Key>클릭 &gt; 설정 &gt; 보안 및 개인정보 보호 &gt; 사이트 설정 &gt; 하단 팝업 및 리디렉션 클릭 &gt; <Warn>사용할 수 있음</Warn> 으로 변경
        </Step>
        <Figures $cols={[494, 361]}>
          <ChromeSettings />
        </Figures>
        <Figures $cols={[340, 515]} $top={10}>
          <ArrowCell><FlowDown /></ArrowCell>
        </Figures>
        <Figures $cols={[339, 46, 278, 192]} $top={9}>
          <ContentSettings />
          <ArrowCell $pad="43px 0 0"><FlowRight /></ArrowCell>
          <DefaultAction />
        </Figures>

        <Browser>Microsoft Edge</Browser>
        <Step $top={2}>
          - 브라우저 우측 상단<Key $wide><Dots /></Key>클릭 &gt; 설정 &gt; 쿠키 및 사이트 권한 &gt; 팝업 및 리디렉션 &gt; 차단 끄기
        </Step>
        <Figures $cols={[447, 408]}>
          <Permissions />
        </Figures>
        <Figures $cols={[447, 408]} $top={9}>
          <ArrowCell><FlowDown /></ArrowCell>
        </Figures>
        <Figures $cols={[447, 408]} $top={9}>
          <PopupSetting />
        </Figures>
      </Section>

      <Section>
        <Title>3. 레지스트리 편집기 DisableRootAutoUpdate 데이터 값 변경</Title>
        <Note>※ 학습 진행 중 아래와 같은 오류 메시지가 확인되는 경우 해결할 수 있습니다.</Note>
        <Bullets>
          <li>- 사이트에 연결할 수 없음</li>
          <li>- 이 페이지가 일시적으로 다운되었거나 새 웹 주소로 완전히 이동했을 수 있습니다</li>
          <li>- 이 페이지는 안전하지 않습니다</li>
        </Bullets>
        <Step $top={11}>① 윈도우 검색 창 &gt; regedit 명령어 입력 후 레지스트리 편집기 실행</Step>
        <Figures $cols={[253, 47, 385, 170]} $top={17}>
          <Desktop>
            <Taskbar>
              <button aria-label="시작"><FaWindows size={13} /></button>
              <button aria-label="검색"><LensIcon /></button>
              <button aria-label="작업 보기"><TaskViewIcon /></button>
              <button aria-label="제어판"><ControlPanelIcon /></button>
              <button aria-label="Internet Explorer"><ExplorerIcon /></button>
              <button aria-label="Microsoft Edge"><EdgeIcon /></button>
              <button aria-label="Chrome"><ChromeIcon /></button>
            </Taskbar>
          </Desktop>
          <ArrowCell $pad="71px 0 0"><FlowRight /></ArrowCell>
          <WindowsSearch />
        </Figures>

        <Step $top={19}>② HKEY LOCAL MACHINE &gt; SOFTWARE &gt; Policies &gt; Microsoft &gt; SystemCertificates &gt; AuthRoot 경로대로 폴더 열기</Step>
        <Step>※ AuthRoot 가 없는 경우 마우스 우클릭 &gt; 새로만들기 &gt; 키 선택 후 이름 동일하게 생성</Step>
        <Figures $cols={[350, 505]} $top={19}>
          <RegistryEditor
            path="컴퓨터₩HKEY_LOCAL_MACHINE"
            left={120}
            nodes={ROOT_NODES}
            values={[unset]}
            min={208}
            listBar={[0, 157, 51]}
          />
        </Figures>
        <Figures $cols={[350, 505]} $top={15}>
          <RegistryEditor
            path="컴퓨터₩HKEY_LOCAL_MACHINE₩SOFTWARE"
            left={120}
            nodes={SOFTWARE_NODES}
            values={[["(기본값)", "REG_SZ", ""]]}
            vbar={[5, 27, 107]}
            hbar={[0, 53, 37]}
            listBar={[0, 157, 51]}
          />
        </Figures>
        <Figures $cols={[350, 505]} $top={14}>
          <RegistryEditor
            path="컴퓨터₩HKEY_LOCAL_MACHINE₩SOFTWARE₩Policies₩Microsoft₩SystemCertificates"
            left={145}
            nodes={POLICY_NODES}
            values={[unset]}
            vbar={[88, 39, 45]}
            hbar={[0, 83, 31]}
            listBar={[0, 123, 60]}
          />
        </Figures>

        <Step $top={18}>③ AuthRoot 클릭 후 오른쪽 DisableRootAutoUpdate 더블 클릭 - 값 데이터 1을 0으로 수정 - 확인 후 PC 재부팅</Step>
        <Figures $cols={[350, 46, 254, 205]}>
          <RegistryEditor
            path="컴퓨터₩HKEY_LOCAL_MACHINE₩SOFTWARE₩Policies₩Microsoft₩SystemCertificates₩AuthRoot"
            left={124}
            nodes={AUTH_NODES}
            values={[unset, ["DisableRootAutoUpdate", "REG_DWORD", "0x00000001 (1)"]]}
            cols={[89, 60]}
            dense
            vbar={[83, 54, 47]}
            hbar={[0, 68, 30]}
            listBar={[0, 190, 14]}
          />
          <ArrowCell $pad="61px 0 0"><FlowRight /></ArrowCell>
          <DwordDialog />
        </Figures>
      </Section>
    </Page>
  );
};

export default App;
